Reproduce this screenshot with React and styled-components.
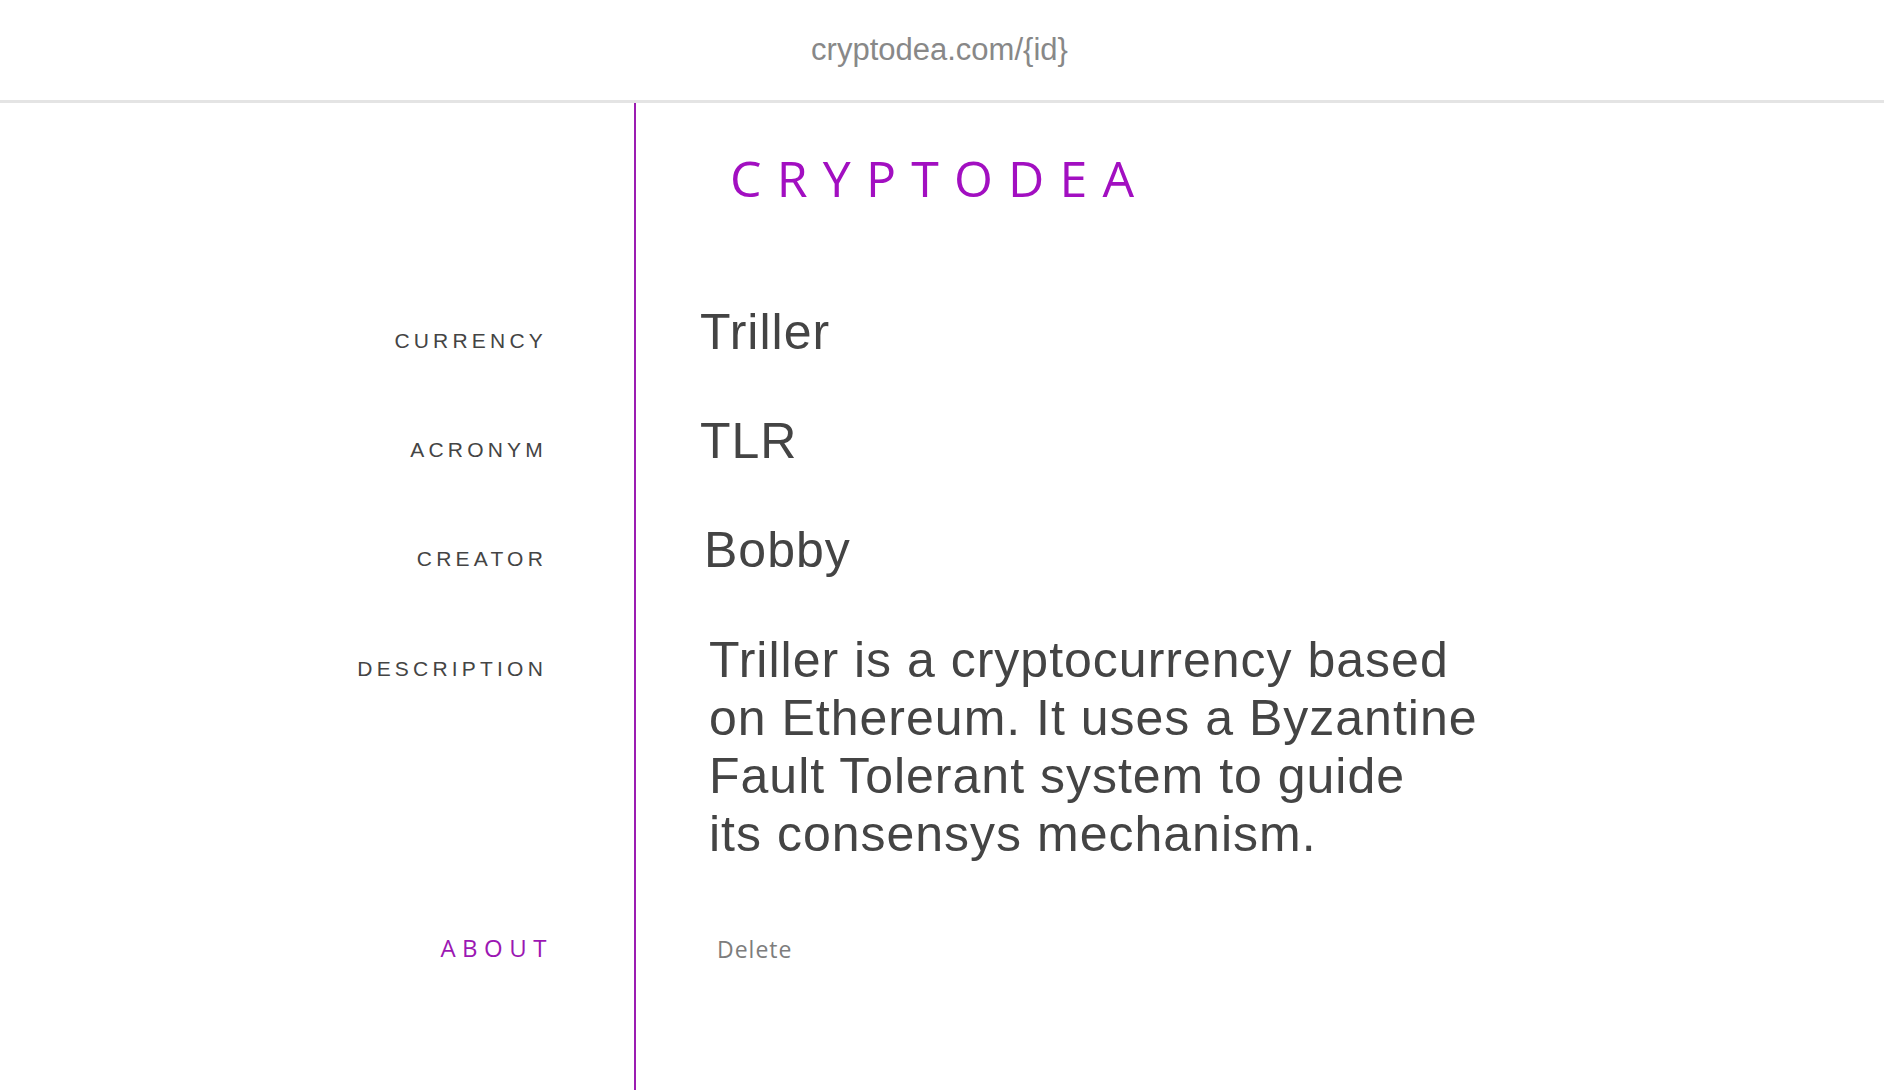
import styled, { createGlobalStyle } from "styled-components";

const GlobalStyle = createGlobalStyle`
  * {
    box-sizing: border-box;
  }

  body {
    margin: 0;
    background: #ffffff;
    font-family: "Liberation Sans", Arial, sans-serif;
    color: #444444;
  }
`;

const fields = [
  { label: "Currency", value: "Triller", indent: 0 },
  { label: "Acronym", value: "TLR", indent: 0 },
  { label: "Creator", value: "Bobby", indent: 4 },
];

const App = () => {
  return (
    <Page>
      <GlobalStyle />
      <Header>
        <Url>cryptodea.com/{"{id}"}</Url>
      </Header>

      <Body>
        {/* Brand */}
        <Row $space={50} $lineHeight={50}>
          <LabelCell />
          <ValueCell>
            <Brand>Cryptodea</Brand>
          </ValueCell>
        </Row>

        {/* Simple fields */}
        {fields.map((field, i) => (
          <Row key={field.label} $space={i === 0 ? 99 : 49}>
            <LabelCell>
              <Label>{field.label}</Label>
            </LabelCell>
            <ValueCell>
              <Value $indent={field.indent}>{field.value}</Value>
            </ValueCell>
          </Row>
        ))}

        {/* Description */}
        <Row $space={51} $lineHeight={58}>
          <LabelCell>
            <Label>Description</Label>
          </LabelCell>
          <ValueCell>
            <Description>
              Triller is a cryptocurrency based
              <br />
              on Ethereum. It uses a Byzantine
              <br />
              Fault Tolerant system to guide
              <br />
              its consensys mechanism.
            </Description>
          </ValueCell>
        </Row>

        {/* Actions */}
        <Row $space={48}>
          <LabelCell>
            <AboutLink href="#">About</AboutLink>
          </LabelCell>
          <ValueCell>
            <DeleteButton type="button">Delete</DeleteButton>
          </ValueCell>
        </Row>

        <Filler>
          <LabelCell />
        </Filler>
      </Body>
    </Page>
  );
};

export default App;

const Page = styled.div`
  display: flex;
  flex-direction: column;
  min-height: 100vh;
`;

const Header = styled.header`
  display: flex;
  align-items: center;
  justify-content: center;
  height: 103px;
  border-bottom: 3px solid #e4e4e4;
`;

const Url = styled.span`
  margin-right: 5px;
  font-size: 31px;
  color: #888888;
`;

const Body = styled.main`
  flex: 1;
  display: flex;
  flex-direction: column;
`;

const Row = styled.div`
  --space: ${(props) => props.$space || 0}px;
  display: flex;
  font-size: 50px;
  line-height: ${(props) => props.$lineHeight || 60}px;
`;

const LabelCell = styled.div`
  flex: 0 0 636px;
  padding-top: var(--space);
  padding-right: 87px;
  border-right: 2px solid #9b1db1;
  text-align: right;
`;

const ValueCell = styled.div`
  flex: 1;
  padding-top: var(--space);
  padding-left: 64px;
`;

const Filler = styled.div`
  flex: 1;
  display: flex;
`;

const Label = styled.span`
  font-size: 21px;
  line-height: 1;
  letter-spacing: 4.2px;
  vertical-align: 1px;
  text-transform: uppercase;
  color: #444444;
`;

const Brand = styled.h1`
  margin: 0;
  padding-left: 30px;
  font-family: "Open Sans", sans-serif;
  font-weight: 400;
  font-size: 50px;
  line-height: 50px;
  letter-spacing: 15.2px;
  text-transform: uppercase;
  color: #a20fc1;
`;

const Value = styled.span`
  padding-left: ${(props) => props.$indent || 0}px;
  font-size: 50px;
  letter-spacing: 1px;
  color: #444444;
`;

const Description = styled.p`
  margin: 0;
  padding-left: 9px;
  font-size: 50px;
  letter-spacing: 1px;
  color: #444444;
`;

const AboutLink = styled.a`
  margin-right: -6px;
  font-family: "Open Sans", sans-serif;
  font-size: 24px;
  line-height: 1;
  letter-spacing: 6.5px;
  vertical-align: 1px;
  text-transform: uppercase;
  text-decoration: none;
  color: #9c17b3;
`;

const DeleteButton = styled.button`
  margin-left: 17px;
  padding: 0;
  border: none;
  background: none;
  font-family: "Open Sans", sans-serif;
  font-size: 23px;
  line-height: 1;
  letter-spacing: 1px;
  color: #7d7d7d;
  cursor: pointer;
`;
